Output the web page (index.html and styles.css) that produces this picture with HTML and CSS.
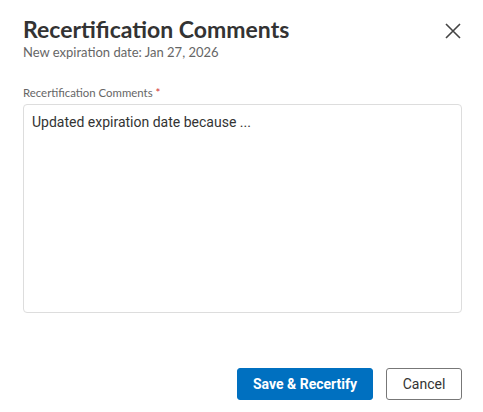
FILE: index.html
```html
<!DOCTYPE html>
<html lang="en">
<head>
<meta charset="utf-8">
<title>Recertification Comments</title>
<link rel="stylesheet" href="styles.css">
</head>
<body>
<div class="dialog">
  <header class="dialog-header">
    <div class="titles">
      <h1 class="title">Recertification Comments</h1>
      <p class="subtitle">New expiration date: Jan 27, 2026</p>
    </div>
    <button class="close" aria-label="Close">
      <svg width="16" height="16" viewBox="0 0 16 16"><path d="M1 1L15 15M15 1L1 15" stroke="#444" stroke-width="1.6" fill="none"/></svg>
    </button>
  </header>
  <div class="field">
    <label class="label">Recertification Comments <span class="req">*</span></label>
    <div class="textarea">Updated expiration date because ...</div>
  </div>
  <footer class="actions">
    <button class="btn primary">Save &amp; Recertify</button>
    <button class="btn secondary">Cancel</button>
  </footer>
</div>
</body>
</html>
```
FILE: styles.css
```css
html, body { margin: 0; padding: 0; background: #fff; }
body { font-family: "Lato", "Open Sans", sans-serif; color: #333; }
.dialog { padding: 14px 21px 0 23px; width: 439px; }
.dialog-header { display: flex; justify-content: space-between; align-items: flex-start; }
.title { margin: 0; font-size: 23px; font-weight: 700; line-height: 30px; color: #333; }
.subtitle { margin: 0; font-size: 13px; line-height: 16px; color: #666; }
.close { background: none; border: 0; padding: 0; margin: 2px -6px 0 0; width: 30px; height: 30px; display: flex; align-items: center; justify-content: center; }
.field { margin-top: 26px; }
.label { display: block; font-size: 11.4px; line-height: 14px; color: #666; margin-bottom: 4px; }
.req { color: #d32f2f; }
.textarea { box-sizing: border-box; height: 209px; border: 1px solid #ddd; border-radius: 4px; padding: 9px 8px; font-family: "Roboto", sans-serif; font-size: 14px; line-height: 16px; color: #333; }
.actions { display: flex; justify-content: flex-end; gap: 13px; margin-top: 55px; }
.btn { height: 32px; border-radius: 3px; font-family: "Roboto", sans-serif; font-size: 14px; padding: 0; white-space: nowrap; cursor: pointer; }
.primary { background: #0070c0; color: #fff; border: 1px solid #0070c0; font-weight: 700; width: 136px; }
.secondary { background: #fff; color: #333; border: 1px solid #777; width: 76px; }
```
